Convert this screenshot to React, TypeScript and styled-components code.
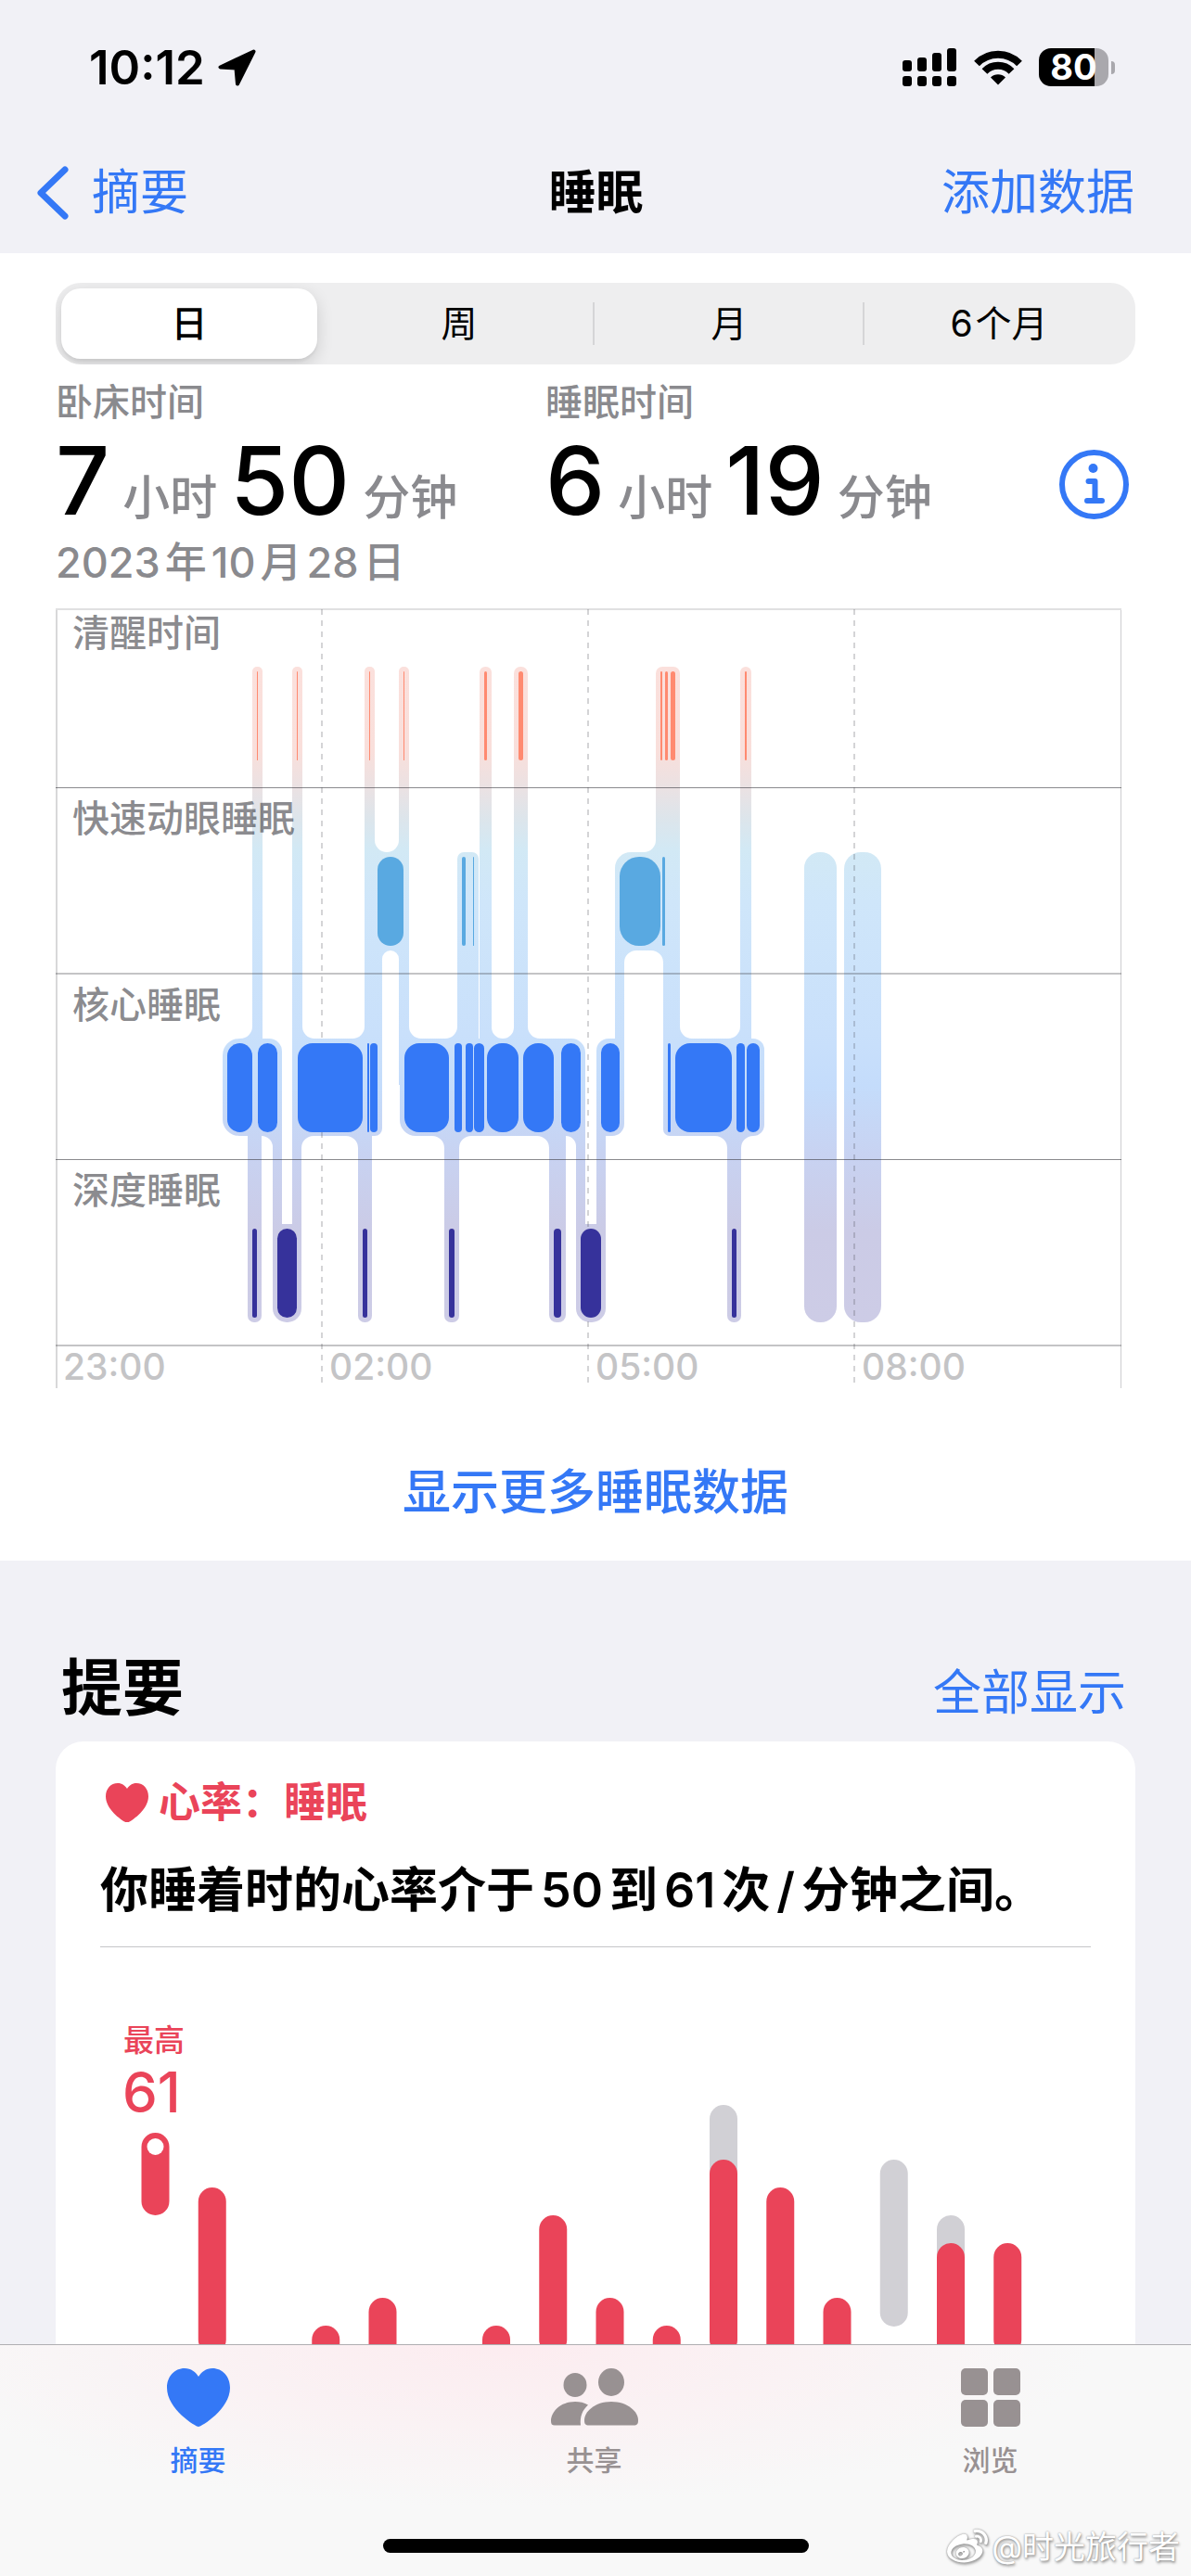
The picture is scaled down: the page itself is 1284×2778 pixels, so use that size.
import React, { useState } from "react";
import styled, { createGlobalStyle } from "styled-components";
import { FaWeibo } from "react-icons/fa";

const BLUE = "#3478f6";
const RED = "#ea4459";
const GREY = "#8a8a8e";
const FONT = `Inter, "Noto Sans CJK SC", sans-serif`;

const GlobalStyle = createGlobalStyle`
  * { box-sizing: border-box; }
  body { margin: 0; background: #f1f1f6; font-family: ${FONT}; color: #000; }
  button { font: inherit; color: inherit; background: none; border: 0; padding: 0; margin: 0; cursor: pointer; }
  svg { display: block; }
`;

const Screen = styled.div`
  position: relative;
  display: flex;
  flex-direction: column;
  height: 100vh;
  overflow: hidden;
  background: #f1f1f6;
`;

/* ---------- status bar ---------- */

const StatusBar = styled.div`
  display: flex;
  justify-content: space-between;
  align-items: center;
  flex: none;
  height: 141px;
  padding: 4px 82px 0 96px;
`;

const Clock = styled.div`
  display: flex;
  align-items: center;
  gap: 14px;
  font-size: 51px;
  line-height: 60px;
  font-weight: 600;
`;

const StatusIcons = styled.div`
  display: flex;
  align-items: center;
  gap: 18px;
`;

const Battery = styled.div`
  display: flex;
  align-items: center;
  gap: 3px;
`;

const BatteryBody = styled.div`
  width: 75px;
  height: 41px;
  border-radius: 13px;
  background: linear-gradient(to right, #000 0 60px, #a9a8ad 60px);
  color: #fff;
  font-size: 38px;
  line-height: 41px;
  font-weight: 700;
  text-align: center;
`;

const BatteryCap = styled.div`
  width: 4px;
  height: 14px;
  border-radius: 0 4px 4px 0;
  background: #a9a8ad;
`;

/* ---------- navigation ---------- */

const NavBar = styled.nav`
  display: grid;
  grid-template-columns: 1fr auto 1fr;
  align-items: center;
  flex: none;
  height: 132px;
  padding: 2px 61px 0 39px;
  font-size: 52px;
  line-height: 72px;
`;

const BackButton = styled.button`
  display: flex;
  align-items: center;
  justify-self: start;
  gap: 25px;
  color: ${BLUE};
`;

const NavTitle = styled.h1`
  margin: 0 0 0 23px;
  font-size: 51px;
  font-weight: 700;
`;

const TextButton = styled.button`
  justify-self: end;
  color: ${BLUE};
  font-size: 52px;
  line-height: 72px;
`;

/* ---------- sleep panel ---------- */

const Content = styled.main`
  flex: 1;
  min-height: 0;
  overflow-y: auto;
  scrollbar-width: none;
`;

const Panel = styled.section`
  padding: 32px 60px 0;
  background: #fff;
`;

const Segments = styled.div`
  display: grid;
  grid-template-columns: repeat(4, 1fr);
  height: 88px;
  border-radius: 27px;
  background: #eeeeef;
  overflow: hidden;
`;

const Segment = styled.button<{ $active: boolean; $divided: boolean }>`
  padding: 6px 9px 6px 6px;
  font-size: 39px;
  line-height: 76px;
  font-weight: ${(p) => (p.$active ? 500 : 400)};
  background: ${(p) =>
    p.$divided ? "linear-gradient(#d5d5d7, #d5d5d7) right 1px top 21px / 2px 46px no-repeat" : "none"};
`;

const SegmentFace = styled.span<{ $active: boolean }>`
  display: flex;
  justify-content: center;
  gap: 3px;
  border-radius: 21px;
  background: ${(p) => (p.$active ? "#fff" : "none")};
  box-shadow: ${(p) => (p.$active ? "0 6px 18px rgba(0, 0, 0, 0.14), 0 3px 3px rgba(0, 0, 0, 0.05)" : "none")};
`;

const Stats = styled.div`
  display: grid;
  grid-template-columns: 528fr 553fr auto;
  align-items: end;
  padding-top: 12px;
`;

const StatLabel = styled.div`
  color: ${GREY};
  font-size: 40px;
  line-height: 58px;
  font-weight: 500;
`;

const StatValue = styled.div`
  display: flex;
  align-items: baseline;
  gap: 14px;
  height: 110px;
  line-height: 110px;
`;

const Figure = styled.span`
  font-size: 102px;
  font-weight: 500;
`;

const Unit = styled.span`
  color: ${GREY};
  font-size: 51px;
  font-weight: 500;
`;

const InfoButton = styled.button`
  margin: 0 6px 12px 0;
`;

const DateLine = styled.div`
  display: flex;
  gap: 5px;
  color: ${GREY};
  font-size: 45px;
  line-height: 68px;
  font-weight: 500;
`;

const ChartBox = styled.div`
  padding-top: 15px;

  svg { width: 100%; height: auto; }
`;

const MoreButton = styled.button`
  display: block;
  width: 100%;
  margin-top: 39px;
  color: ${BLUE};
  font-size: 52px;
  line-height: 146px;
  font-weight: 500;
`;

/* ---------- highlights ---------- */

const SectionHead = styled.div`
  display: flex;
  justify-content: space-between;
  align-items: baseline;
  padding: 92px 70px 13px 66px;
`;

const SectionTitle = styled.h2`
  margin: 0;
  font-size: 66px;
  line-height: 90px;
  font-weight: 700;
`;

const Card = styled.article`
  margin: 0 60px 60px;
  padding: 36px 48px 48px;
  border-radius: 30px;
  background: #fff;
`;

const CardTag = styled.div`
  display: flex;
  align-items: center;
  gap: 11px;
  padding-left: 6px;
  color: ${RED};
  font-size: 45px;
  line-height: 60px;
  font-weight: 600;
`;

const CardText = styled.p`
  display: flex;
  flex-wrap: wrap;
  column-gap: 7px;
  margin: 29px 0 0;
  padding-bottom: 24px;
  border-bottom: 1px solid #c6c6c8;
  font-size: 52px;
  line-height: 72px;
  font-weight: 600;
`;

const CardChart = styled.div`
  svg { width: 100%; height: auto; }
`;

/* ---------- tab bar ---------- */

const TabBar = styled.nav`
  flex: none;
  height: 250px;
  border-top: 1px solid #b0aeb2;
  background:
    radial-gradient(ellipse 50% 70% at 42% 0, rgba(255, 228, 234, 0.6), rgba(255, 228, 234, 0) 100%),
    #f8f8f8;
`;

const Tabs = styled.div`
  display: grid;
  grid-template-columns: repeat(3, 1fr);
  padding-right: 3px;
`;

const Tab = styled.button<{ $active?: boolean }>`
  display: flex;
  flex-direction: column;
  align-items: center;
  gap: 14px;
  padding-top: 25px;
  color: ${(p) => (p.$active ? BLUE : "#989192")};
  font-size: 30px;
  line-height: 44px;
  font-weight: 500;
`;

const HomeIndicator = styled.div`
  width: 459px;
  max-width: 60%;
  height: 15px;
  margin: 63px auto 0;
  border-radius: 8px;
  background: #000;
`;

const Watermark = styled.div`
  position: absolute;
  right: 12px;
  bottom: 7px;
  display: flex;
  align-items: center;
  gap: 4px;
  color: #fff;
  font-size: 34px;
  line-height: 48px;
  text-shadow: 0 0 2px #888, 1px 2px 3px #999;

  svg { filter: drop-shadow(0 0 1px #888) drop-shadow(1px 2px 1px #aaa); }
`;

/* ---------- sleep stage data ---------- */

type Span = [number, number];

const STAGES: { label: string; y: number; labelY: number; color: string; radius: number; spans: Span[] }[] = [
  {
    label: "清醒时间", y: 724, labelY: 697, color: "#ff8a70", radius: 3,
    spans: [[277, 278], [320, 321], [398, 399], [435, 436], [522, 525], [559, 564], [712, 714], [717, 720], [723, 728], [803, 805]],
  },
  {
    label: "快速动眼睡眠", y: 924, labelY: 897, color: "#59a9e1", radius: 21,
    spans: [[407, 435], [498, 502], [510, 511], [668, 712], [714, 717]],
  },
  {
    label: "核心睡眠", y: 1125, labelY: 1098, color: "#3478f6", radius: 16,
    spans: [
      [245, 272], [278, 299], [321, 391], [396, 398], [399, 407], [436, 484], [490, 498], [502, 510], [511, 522],
      [525, 559], [564, 597], [605, 626], [648, 668], [720, 723], [728, 789], [794, 803], [805, 819],
    ],
  },
  {
    label: "深度睡眠", y: 1325, labelY: 1298, color: "#36329b", radius: 11,
    spans: [[272, 277], [299, 320], [391, 396], [484, 490], [597, 605], [626, 648], [789, 794]],
  },
];

/* Halo pieces: x1, x2, y1, y2, then corner radii tl, tr, br, bl. */
const HALO: [number, number, number, number, number, number, number, number][] = [
  [272, 283, 719, 1170, 5, 5, 0, 0],
  [315, 326, 719, 1170, 5, 5, 0, 0],
  [393, 404, 719, 1170, 5, 5, 0, 0],
  [430, 441, 719, 1170, 5, 5, 0, 0],
  [517, 530, 719, 1170, 6, 6, 0, 0],
  [554, 569, 719, 1170, 7, 7, 0, 0],
  [707, 733, 719, 1025, 7, 7, 0, 0],
  [798, 810, 719, 1170, 6, 6, 0, 0],
  [393, 441, 919, 1025, 0, 0, 0, 0],
  [402, 412, 970, 1170, 0, 0, 0, 0],
  [493, 516, 919, 1170, 7, 7, 0, 0],
  [663, 733, 919, 1025, 17, 0, 0, 0],
  [663, 673, 970, 1170, 0, 0, 0, 0],
  [715, 733, 970, 1170, 0, 0, 0, 0],
  [240, 304, 1120, 1225, 18, 14, 0, 18],
  [315, 412, 1120, 1225, 0, 0, 8, 0],
  [431, 631, 1120, 1225, 0, 15, 0, 17],
  [643, 673, 1120, 1225, 13, 0, 13, 0],
  [715, 824, 1120, 1225, 0, 12, 12, 7],
  [267, 282, 1170, 1426, 0, 0, 7, 7],
  [294, 325, 1320, 1426, 0, 0, 15, 15],
  [294, 304, 1170, 1370, 0, 0, 0, 0],
  [315, 325, 1170, 1370, 0, 0, 0, 0],
  [386, 401, 1170, 1426, 0, 0, 7, 7],
  [479, 495, 1170, 1426, 0, 0, 7, 7],
  [592, 610, 1170, 1426, 0, 0, 8, 8],
  [621, 653, 1320, 1426, 0, 0, 15, 15],
  [621, 631, 1170, 1370, 0, 0, 0, 0],
  [643, 653, 1170, 1370, 0, 0, 0, 0],
  [784, 799, 1170, 1426, 0, 0, 7, 7],
  [867, 902, 919, 1426, 17, 17, 17, 17],
  [910, 950, 919, 1426, 18, 18, 18, 18],
];

/* Concave joints between halo pieces: corner x, corner y, direction x, direction y, radius. */
const FILLETS: [number, number, number, number, number][] = [
  [272, 1120, -1, -1, 13],
  [326, 1120, 1, -1, 13],
  [325, 1225, 1, 1, 13],
  [294, 1225, -1, 1, 12],
  [386, 1225, -1, 1, 13],
  [393, 1120, -1, -1, 13],
  [404, 919, 1, -1, 13],
  [430, 919, -1, -1, 13],
  [412, 1025, 1, 1, 9],
  [430, 1025, -1, 1, 9],
  [441, 1120, 1, -1, 13],
  [479, 1225, -1, 1, 13],
  [495, 1225, 1, 1, 13],
  [493, 1120, -1, -1, 13],
  [530, 1120, 1, -1, 12],
  [554, 1120, -1, -1, 12],
  [569, 1120, 1, -1, 13],
  [592, 1225, -1, 1, 13],
  [621, 1225, -1, 1, 11],
  [707, 919, -1, -1, 13],
  [673, 1025, 1, 1, 13],
  [715, 1025, -1, 1, 13],
  [733, 1120, 1, -1, 13],
  [798, 1120, -1, -1, 13],
  [784, 1225, -1, 1, 13],
  [799, 1225, 1, 1, 13],
];

const roundedRect = ([x1, x2, y1, y2, tl, tr, br, bl]: (typeof HALO)[number]) =>
  `M${x1 + tl} ${y1}H${x2 - tr}A${tr} ${tr} 0 0 1 ${x2} ${y1 + tr}V${y2 - br}A${br} ${br} 0 0 1 ${x2 - br} ${y2}` +
  `H${x1 + bl}A${bl} ${bl} 0 0 1 ${x1} ${y2 - bl}V${y1 + tl}A${tl} ${tl} 0 0 1 ${x1 + tl} ${y1}Z`;

const fillet = ([x, y, sx, sy, r]: (typeof FILLETS)[number]) =>
  `M${x - sx} ${y - sy}H${x + sx * r}V${y}A${r} ${r} 0 0 ${sx * sy > 0 ? 0 : 1} ${x} ${y + sy * r}H${x - sx}Z`;

const HOURS: [number, string][] = [[60, "23:00"], [347, "02:00"], [634, "05:00"], [921, "08:00"]];

function SleepChart() {
  return (
    <svg viewBox="60 656 1164 842" role="img" aria-label="睡眠阶段">
      <defs>
        <linearGradient id="halo" gradientUnits="userSpaceOnUse" x1="0" x2="0" y1="719" y2="1426">
          <stop offset="0" stopColor="#fbe0dc" />
          <stop offset="0.13" stopColor="#f9dfdb" />
          <stop offset="0.19" stopColor="#e9e2e4" />
          <stop offset="0.23" stopColor="#dde5eb" />
          <stop offset="0.28" stopColor="#d2e9f5" />
          <stop offset="0.36" stopColor="#cfe6fa" />
          <stop offset="0.56" stopColor="#c9e0fb" />
          <stop offset="0.64" stopColor="#c4dcfb" />
          <stop offset="0.75" stopColor="#c8d2f1" />
          <stop offset="0.86" stopColor="#cbcbe6" />
          <stop offset="1" stopColor="#cdcce6" />
        </linearGradient>
      </defs>
      <g fill="url(#halo)">
        {HALO.map((h, i) => <path key={i} d={roundedRect(h)} />)}
        {FILLETS.map((f, i) => <path key={i} d={fillet(f)} />)}
      </g>
      <g fill="rgba(60,60,67,0.16)">
        <rect x="60" y="656" width="1149" height="2" />
        <rect x="60" y="658" width="2" height="839" fill="rgba(60,60,67,0.2)" />
        <rect x="1208" y="658" width="1" height="839" fill="rgba(60,60,67,0.25)" />
      </g>
      <g stroke="rgba(60,60,67,0.22)" strokeWidth="2" strokeDasharray="6 6">
        <path d="M347 657V1491M634 657V1491M921 657V1491" />
      </g>
      <g fill="rgba(60,60,67,0.6)">
        <rect x="60" y="849" width="1149" height="1" />
        <rect x="60" y="1250" width="1149" height="1" />
        <rect x="60" y="1049" width="1149" height="2" fillOpacity="0.5" />
        <rect x="60" y="1450" width="1149" height="2" fillOpacity="0.5" />
      </g>
      {STAGES.map((s) => (
        <g key={s.label}>
          <text x="78" y={s.labelY} fontSize="40" fontWeight="500" fill="rgba(60,60,67,0.6)">{s.label}</text>
          {s.spans.map(([a, b]) => (
            <rect key={a} x={a} y={s.y} width={b - a} height="96" rx={Math.min(s.radius, (b - a) / 2)} fill={s.color} />
          ))}
        </g>
      ))}
      {HOURS.map(([x, t]) => (
        <text key={t} x={x + 8} y="1488" fontSize="39" fontWeight="500" fill="#c4c4c6">{t}</text>
      ))}
    </svg>
  );
}

/* Heart-rate columns: asleep range in red, awake range in grey, each as top and bottom. */
const BEATS: { slot: number; red?: Span; grey?: Span }[] = [
  { slot: 0, red: [2300, 2389] },
  { slot: 1, red: [2359, 2538] },
  { slot: 3, red: [2508, 2600] },
  { slot: 4, red: [2478, 2600] },
  { slot: 6, red: [2508, 2600] },
  { slot: 7, red: [2389, 2538] },
  { slot: 8, red: [2478, 2600] },
  { slot: 9, red: [2508, 2600] },
  { slot: 10, grey: [2270, 2538], red: [2329, 2538] },
  { slot: 11, red: [2359, 2568] },
  { slot: 12, red: [2478, 2600] },
  { slot: 13, grey: [2329, 2509] },
  { slot: 14, grey: [2389, 2600], red: [2419, 2600] },
  { slot: 15, red: [2419, 2538] },
];

function HeartChart() {
  const column = (slot: number, [top, bottom]: Span, fill: string) => (
    <rect key={`${slot}${fill}`} x={152.5 + slot * 61.25} y={top} width="30" height={bottom - top} rx="15" fill={fill} />
  );
  return (
    <svg viewBox="108 2100 1068 560" role="img" aria-label="心率">
      <text x="133" y="2212" fontSize="33" fontWeight="500" fill={RED}>最高</text>
      <text x="132" y="2278" fontSize="60" fontWeight="500" fill={RED}>61</text>
      {BEATS.map((b) => b.grey && column(b.slot, b.grey, "#d1d0d5"))}
      {BEATS.map((b) => b.red && column(b.slot, b.red, RED))}
      <circle cx="167.5" cy="2315" r="9" fill="#fff" />
    </svg>
  );
}

/* ---------- icons ---------- */

const Heart = ({ width }: { width: number }) => (
  <svg width={width} viewBox="0 0 68 63" fill="currentColor">
    <path d="M34 63C31 63 0 44 0 21C0 9 8 0 19 0C26 0 31 4 34 9C37 4 42 0 49 0C60 0 68 9 68 21C68 44 37 63 34 63Z" />
  </svg>
);

const LocationArrow = () => (
  <svg width="41" height="40" viewBox="0 0 41 40">
    <path d="M38.5 2.5L2.5 19.5L19.5 20.5L21 37.5Z" stroke="#000" strokeWidth="4" strokeLinejoin="round" />
  </svg>
);

const Signal = () => (
  <svg width="59" height="41" viewBox="0 0 59 41">
    {[[0, 13], [16, 10], [32, 5], [48, 0]].map(([x, y]) => (
      <g key={x}>
        <rect x={x} y={y} width="10" height={25 - y} rx="3" />
        <rect x={x} y="30" width="10" height="11" rx="3" />
      </g>
    ))}
  </svg>
);

const Wifi = () => (
  <svg width="52" height="38" viewBox="0 0 52 38" fill="none" stroke="#000" strokeWidth="8">
    <path d="M3 14.5A32 32 0 0 1 49 14.5" />
    <path d="M11.5 23A20 20 0 0 1 40.5 23" />
    <path d="M26 37.5L18 29.5A11.5 11.5 0 0 1 34 29.5Z" fill="#000" stroke="none" />
  </svg>
);

const Chevron = () => (
  <svg width="35" height="58" viewBox="0 0 35 58">
    <path d="M31 4L5 29L31 54" fill="none" stroke="currentColor" strokeWidth="7" strokeLinecap="round" strokeLinejoin="round" />
  </svg>
);

const Info = () => (
  <svg width="77" height="77" viewBox="0 0 77 77" fill="none" stroke={BLUE} strokeWidth="6">
    <circle cx="38.5" cy="38.5" r="34.5" />
    <circle cx="37.5" cy="21" r="5" fill={BLUE} stroke="none" />
    <path d="M32.500 35H39.500V56M31 56H47" strokeLinecap="round" strokeLinejoin="round" strokeWidth="6" />
  </svg>
);

const People = () => (
  <svg width="94" height="63" viewBox="0 0 94 63" fill="currentColor">
    <ellipse cx="26" cy="18" rx="12.5" ry="13" />
    <ellipse cx="65" cy="15" rx="14" ry="15" />
    <path d="M4 61.5C1 61.5 0 60 0 57C0 47 10 36 26 36C31 36 36 37 40 39.500C34 45 31 52 32 61.5Z" />
    <path d="M41 61.5C37 61.5 36 60 36 56C36 47 47 36 65 36C83 36 94 47 94 56C94 60 93 61.5 89 61.5Z" />
  </svg>
);

const Grid = () => (
  <svg width="64" height="63" viewBox="0 0 64 63" fill="currentColor">
    <rect width="29" height="29" rx="5" />
    <rect x="35" width="29" height="29" rx="5" />
    <rect y="34" width="29" height="29" rx="5" />
    <rect x="35" y="34" width="29" height="29" rx="5" />
  </svg>
);

/* ---------- page ---------- */

const RANGES = ["日", "周", "月", "6个月"];

/* Splits a line where digits or slashes meet Chinese characters, so that a gap can sit between the runs. */
const Runs = ({ text }: { text: string }) => (
  <>
    {(text.match(/\d+|\/|[^\d/]+/g) ?? []).map((run, i) => <span key={i}>{run}</span>)}
  </>
);

function Stat({ label, hours, minutes }: { label: string; hours: number; minutes: number }) {
  return (
    <div>
      <StatLabel>{label}</StatLabel>
      <StatValue>
        <Figure>{hours}</Figure>
        <Unit>小时</Unit>
        <Figure>{minutes}</Figure>
        <Unit>分钟</Unit>
      </StatValue>
    </div>
  );
}

export default function App() {
  const [range, setRange] = useState(0);
  return (
    <Screen>
      <GlobalStyle />
      <StatusBar>
        <Clock>10:12<LocationArrow /></Clock>
        <StatusIcons>
          <Signal />
          <Wifi />
          <Battery><BatteryBody>80</BatteryBody><BatteryCap /></Battery>
        </StatusIcons>
      </StatusBar>
      <NavBar>
        <BackButton><Chevron />摘要</BackButton>
        <NavTitle>睡眠</NavTitle>
        <TextButton>添加数据</TextButton>
      </NavBar>
      <Content>
        <Panel>
          <Segments>
            {RANGES.map((r, i) => (
              <Segment
                key={r}
                $active={i === range}
                $divided={i !== range && i + 1 !== range && i < RANGES.length - 1}
                onClick={() => setRange(i)}
              >
                <SegmentFace $active={i === range}><Runs text={r} /></SegmentFace>
              </Segment>
            ))}
          </Segments>
          <Stats>
            <Stat label="卧床时间" hours={7} minutes={50} />
            <Stat label="睡眠时间" hours={6} minutes={19} />
            <InfoButton aria-label="信息"><Info /></InfoButton>
          </Stats>
          <DateLine><Runs text="2023年10月28日" /></DateLine>
          <ChartBox><SleepChart /></ChartBox>
          <MoreButton>显示更多睡眠数据</MoreButton>
        </Panel>
        <SectionHead>
          <SectionTitle>提要</SectionTitle>
          <TextButton>全部显示</TextButton>
        </SectionHead>
        <Card>
          <CardTag><Heart width={46} />心率：睡眠</CardTag>
          <CardText><Runs text="你睡着时的心率介于50到61次/分钟之间。" /></CardText>
          <CardChart><HeartChart /></CardChart>
        </Card>
      </Content>
      <TabBar>
        <Tabs>
          <Tab $active><Heart width={68} />摘要</Tab>
          <Tab><People />共享</Tab>
          <Tab><Grid />浏览</Tab>
        </Tabs>
        <HomeIndicator />
      </TabBar>
      <Watermark><FaWeibo size={44} />@时光旅行者</Watermark>
    </Screen>
  );
}
